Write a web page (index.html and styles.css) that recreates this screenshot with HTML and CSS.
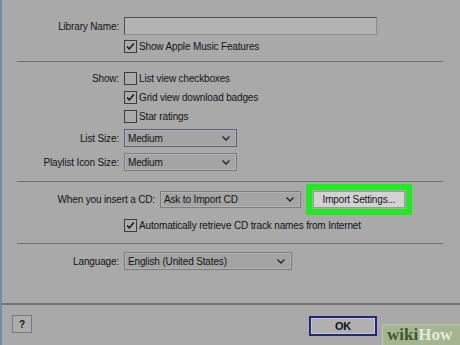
FILE: index.html
```html
<!DOCTYPE html>
<html lang="en">
<head>
    <meta charset="UTF-8">
    <meta name="viewport" content="width=device-width, initial-scale=1.0">
    <title>General Preferences</title>
    <link rel="stylesheet" href="styles.css">
</head>
<body>
    <div class="dialog">
        <!-- Library -->
        <div class="form-grid first">
            <span class="lbl">Library Name:</span>
            <div class="textbox"></div>
            <span></span>
            <label class="check-row">
                <span class="box"><svg viewBox="0 0 13 13"><polyline points="2.5,6.5 5,9.5 10.5,3"/></svg></span>
                Show Apple Music Features
            </label>
        </div>

        <div class="sep"></div>

        <!-- View options -->
        <div class="form-grid">
            <span class="lbl">Show:</span>
            <label class="check-row"><span class="box"></span>List view checkboxes</label>
            <span></span>
            <label class="check-row">
                <span class="box"><svg viewBox="0 0 13 13"><polyline points="2.5,6.5 5,9.5 10.5,3"/></svg></span>
                Grid view download badges
            </label>
            <span></span>
            <label class="check-row"><span class="box"></span>Star ratings</label>
            <span class="lbl">List Size:</span>
            <div class="combo size focused">Medium<svg viewBox="0 0 8 5"><polyline points="0.5,0.5 4,4 7.5,0.5"/></svg></div>
            <span class="lbl">Playlist Icon Size:</span>
            <div class="combo size">Medium<svg viewBox="0 0 8 5"><polyline points="0.5,0.5 4,4 7.5,0.5"/></svg></div>
        </div>

        <div class="sep cd-sep"></div>

        <!-- CD import -->
        <div class="cd-row">
            <span class="lbl cd-lbl">When you insert a CD:</span>
            <div class="combo cd">Ask to Import CD<svg viewBox="0 0 8 5"><polyline points="0.5,0.5 4,4 7.5,0.5"/></svg></div>
            <div class="highlight">
                <button class="btn import">Import Settings...</button>
            </div>
        </div>
        <div class="form-grid auto">
            <span></span>
            <label class="check-row">
                <span class="box"><svg viewBox="0 0 13 13"><polyline points="2.5,6.5 5,9.5 10.5,3"/></svg></span>
                Automatically retrieve CD track names from Internet
            </label>
        </div>

        <div class="sep lang-sep"></div>

        <!-- Language -->
        <div class="form-grid">
            <span class="lbl">Language:</span>
            <div class="combo lang">English (United States)<svg viewBox="0 0 8 5"><polyline points="0.5,0.5 4,4 7.5,0.5"/></svg></div>
        </div>
    </div>

    <div class="footer">
        <button class="btn help">?</button>
        <button class="btn ok">OK</button>
    </div>

    <div class="watermark"><span class="wiki">wiki</span><span class="how">How</span></div>
</body>
</html>
```

FILE: styles.css
```css
html, body {
    margin: 0;
    padding: 0;
}
body {
    width: 458px;
    height: 345px;
    overflow: hidden;
    display: flex;
    flex-direction: column;
    background-color: #a9a9a9;
    border-left: 2px solid #6f8bab;
    font-family: "Liberation Sans", Arial, sans-serif;
    font-size: 10px;
    letter-spacing: -0.15px;
    color: #141414;
}
.dialog {
    padding-top: 17px;
}
.form-grid {
    display: grid;
    grid-template-columns: 117px auto;
    column-gap: 5px;
    row-gap: 6px;
    align-items: center;
    justify-items: start;
}
.form-grid.first {
    row-gap: 5px;
}
.lbl {
    justify-self: end;
    white-space: nowrap;
}
.textbox {
    width: 251px;
    height: 16px;
    background-color: #b3b3b3;
    border: 1px solid #4e4e4e;
    border-right-color: #8c8c8c;
    border-bottom-color: #8c8c8c;
}
.check-row {
    display: flex;
    align-items: center;
    gap: 2px;
    height: 13px;
    white-space: nowrap;
}
.box {
    width: 11px;
    height: 11px;
    border: 1px solid #3c3c3c;
    background-color: #ababab;
    display: flex;
}
.box svg {
    width: 11px;
    height: 11px;
    fill: none;
    stroke: #111;
    stroke-width: 1.6;
}
.sep {
    height: 1px;
    background-color: #707070;
    margin: 8px 17px 10px 15px;
}
.cd-sep {
    margin-top: 10px;
}
.combo {
    height: 16px;
    box-sizing: content-box;
    display: flex;
    align-items: center;
    justify-content: space-between;
    padding: 0 6px 0 3px;
    background-color: #a4a4a4;
    border: 1px solid #7c7c7c;
    box-shadow: inset 0 0 0 1px #b2b2b2;
    white-space: nowrap;
}
.combo svg {
    width: 8px;
    height: 5px;
    fill: none;
    stroke: #222;
    stroke-width: 1.3;
}
.combo.focused {
    border-color: #5c5c7c;
}
.combo.size {
    width: 102px;
}
.combo.cd {
    width: 130px;
    height: 15px;
}
.combo.lang {
    width: 157px;
}
.cd-row {
    display: flex;
    align-items: center;
    gap: 5px;
    margin-top: -8px;
}
.cd-lbl {
    width: 153px;
    text-align: right;
}
.highlight {
    border: 6px solid #22ea22;
    padding: 1px;
    display: flex;
}
.btn {
    font-family: inherit;
    font-size: 10px;
    letter-spacing: -0.15px;
    color: #141414;
    padding: 0;
    margin: 0;
    cursor: pointer;
}
.import {
    width: 92px;
    height: 17px;
    background-color: #d2d2d2;
    border: 1px solid #9a9a9a;
}
.form-grid.auto {
    margin-top: 4px;
}
.lang-sep {
    margin-top: 11px;
    margin-bottom: 8px;
}
.footer {
    margin-top: auto;
    height: 30px;
    border-top: 2px solid #737373;
    display: flex;
    align-items: flex-start;
    padding: 10px 83px 0 10px;
}
.help {
    width: 20px;
    height: 18px;
    background-color: #adadad;
    border: 1px solid #7a7a7a;
    font-weight: bold;
}
.ok {
    margin-left: auto;
    margin-top: 1px;
    width: 68px;
    height: 20px;
    background-color: #b0b0b0;
    border: 2px solid #1d2a80;
    box-shadow: inset 0 0 0 1px #c8c8c8;
    font-weight: bold;
    font-size: 11px;
}
.watermark {
    position: absolute;
    right: 0;
    bottom: 0;
    width: 73px;
    height: 20px;
    padding-left: 4px;
    background-color: #a5b591;
    border-left: 1px solid #bccaa8;
    border-top: 1px solid #bccaa8;
    font-family: "Liberation Serif", "Times New Roman", serif;
    font-weight: bold;
    font-size: 17px;
    line-height: 20px;
    letter-spacing: 0;
}
.wiki {
    color: #3e5a30;
}
.how {
    color: #e3ebd9;
}
```
